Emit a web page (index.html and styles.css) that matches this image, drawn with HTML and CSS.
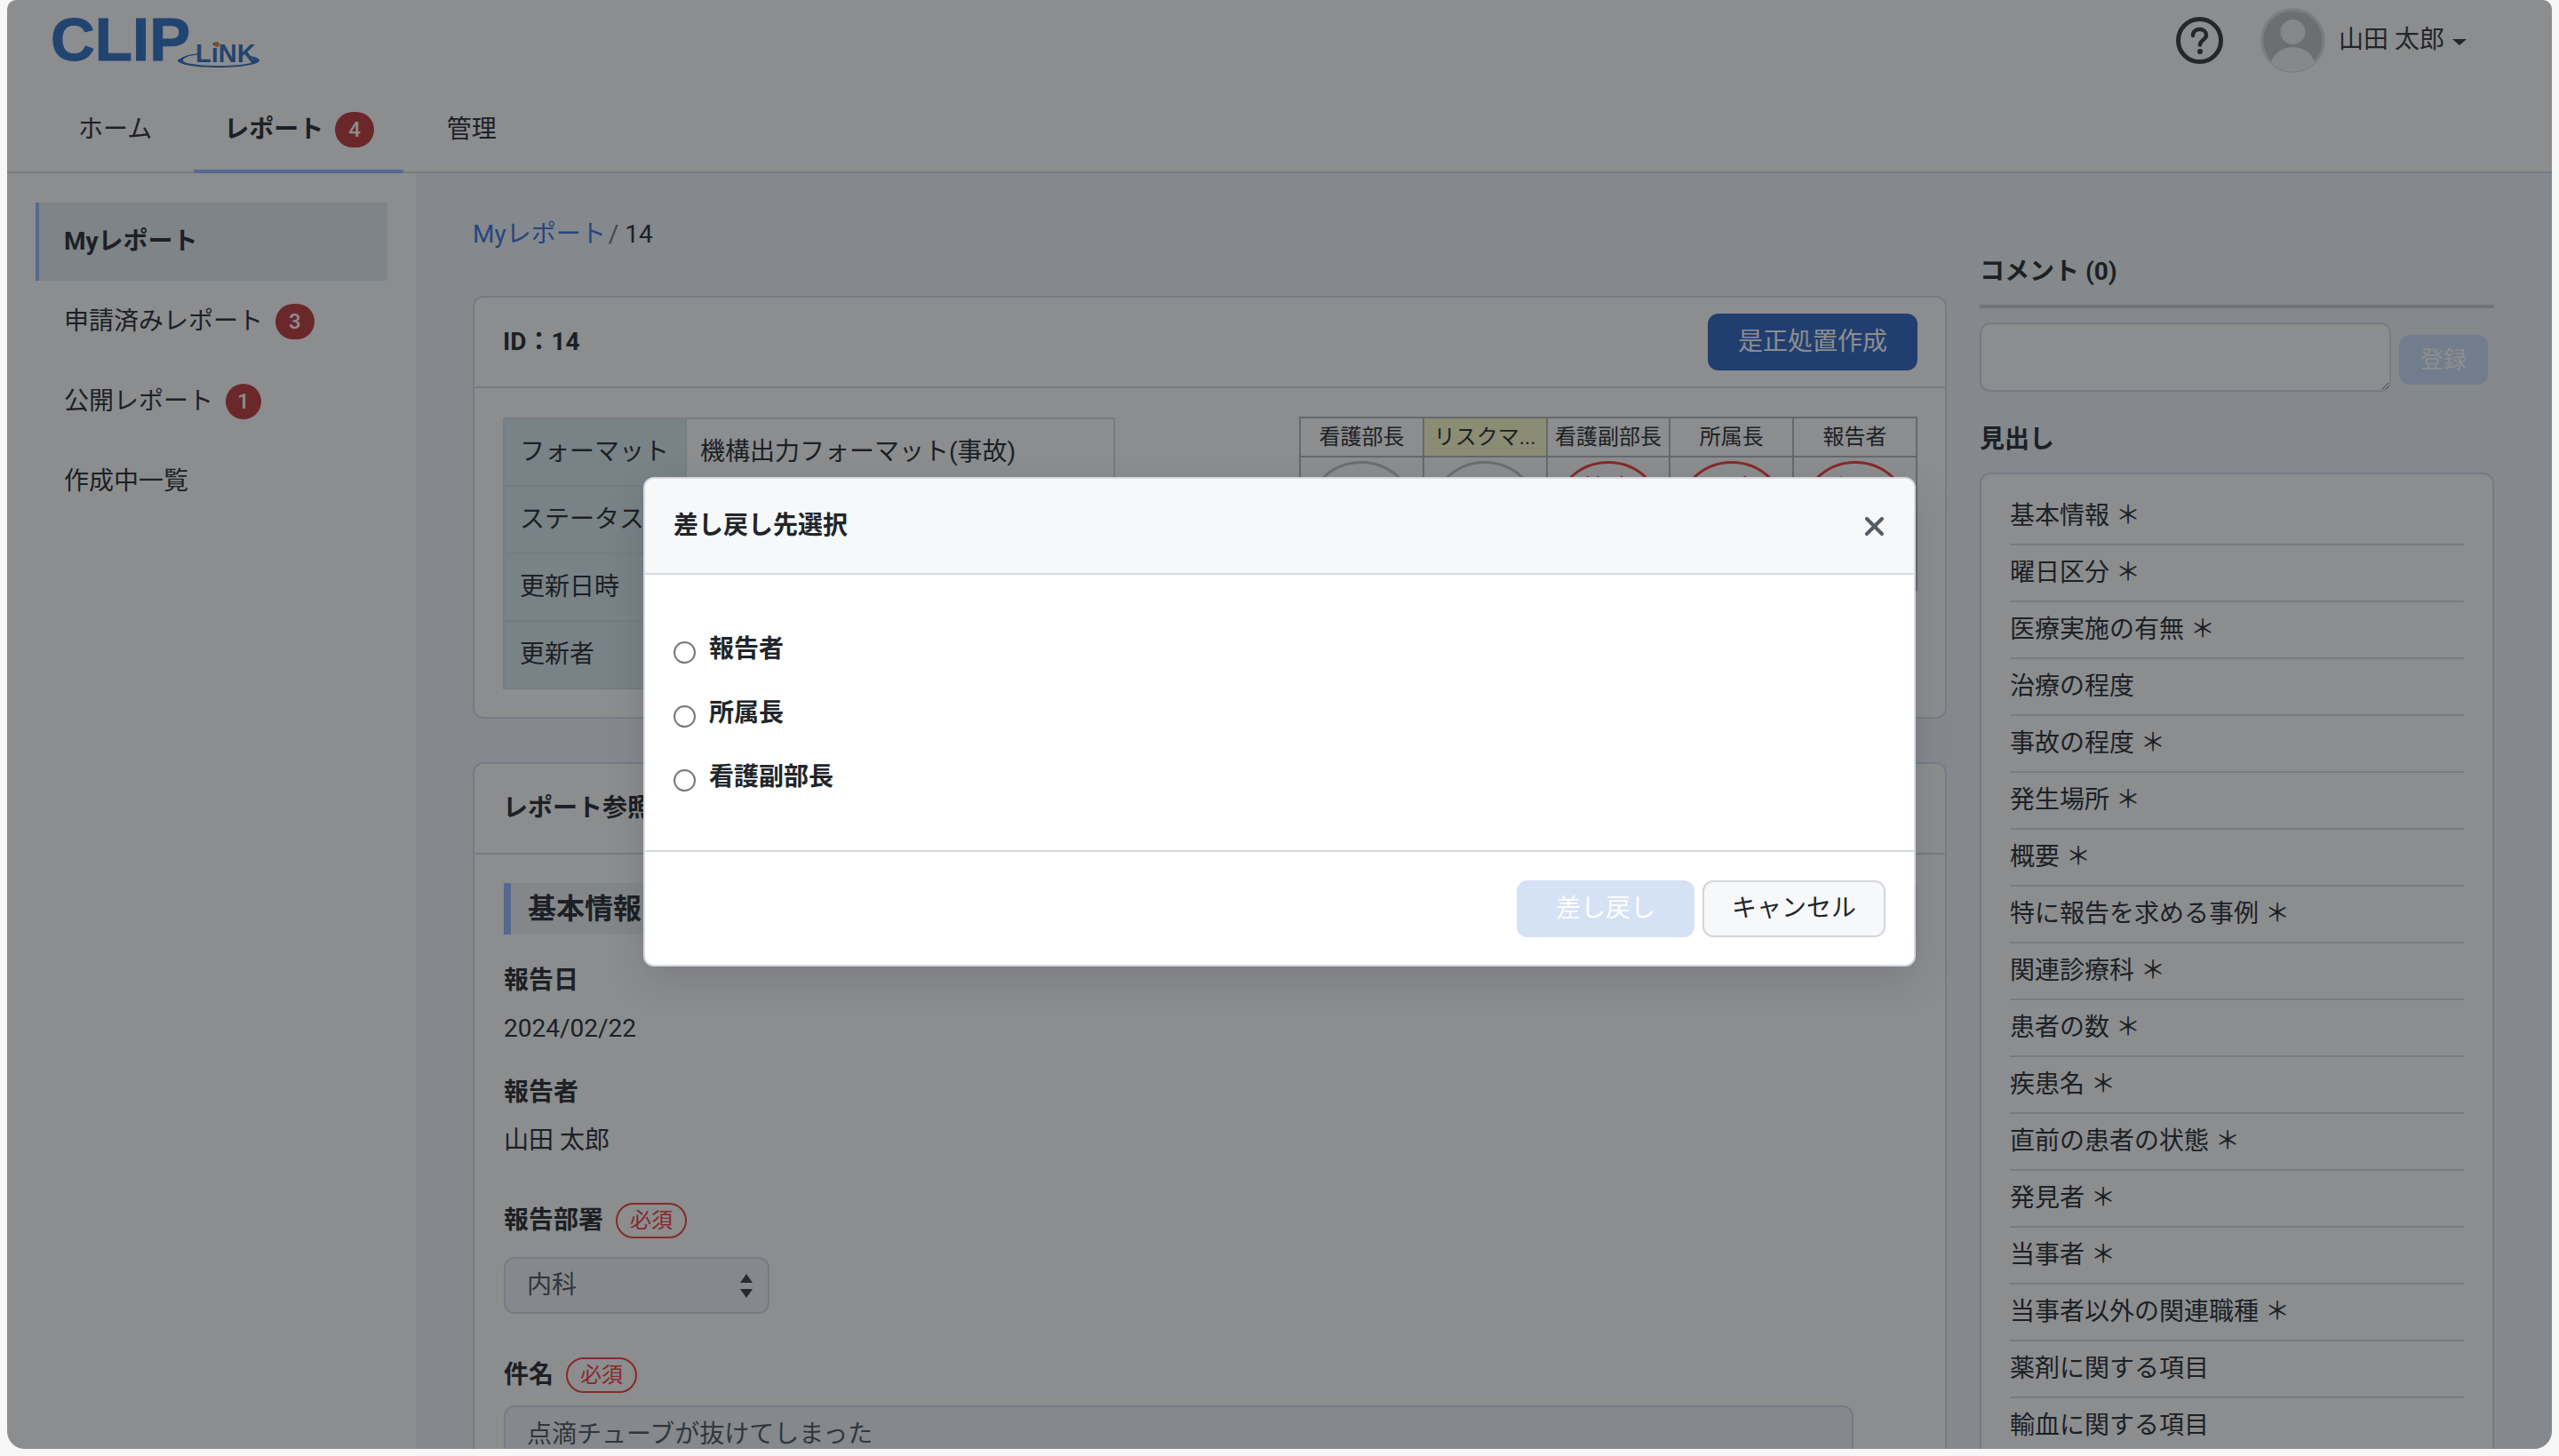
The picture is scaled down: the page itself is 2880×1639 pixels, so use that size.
FILE: index.html
```html
<!DOCTYPE html>
<html lang="ja">
<head>
    <meta charset="UTF-8">
    <meta name="viewport" content="width=device-width, initial-scale=1.0">
    <title>差し戻し先選択</title>
    <link rel="stylesheet" href="styles.css">
</head>
<body>
    <div class="app">
        <header class="header">
            <div class="header-top">
                <div class="logo">
                    <span class="logo-clip">CLIP</span>
                    <span class="logo-link">LiNK</span>
                    <span class="logo-dot"></span>
                    <svg class="logo-swoosh" viewBox="0 0 96 18" width="96" height="18">
                        <path d="M2 9C8 3 22 1 30 1L22 3C12 4 8 7 8 9C8 13 30 15 48 15C68 15 88 13 88 9C88 6 82 4 76 3C86 4 94 6 94 9C94 14 70 17 48 17C24 17 2 14 2 9Z" fill="#2a6cc0"/>
                    </svg>
                </div>
                <div class="header-user">
                    <svg class="help-icon" viewBox="0 0 53 53" width="53" height="53">
                        <circle cx="26.5" cy="26.5" r="24" fill="none" stroke="#2d343a" stroke-width="5"/>
                        <path d="M19 21C19 16.500 22.500 14 26.500 14C31 14 34 16.800 34 20.500C34 26 27 26 27 31.500" fill="none" stroke="#2d343a" stroke-width="4.500" stroke-linecap="round"/>
                        <circle cx="27" cy="39" r="3" fill="#2d343a"/>
                    </svg>
                    <svg class="avatar" viewBox="0 0 73 73" width="73" height="73">
                        <defs><clipPath id="av"><ellipse cx="36.500" cy="36.500" rx="35" ry="35"/></clipPath></defs>
                        <circle cx="36.500" cy="36.500" r="35.500" fill="#dcdcdc" stroke="#e2e2e2" stroke-width="2"/>
                        <circle cx="36.500" cy="36.500" r="33" fill="#c0c0c0"/>
                        <g clip-path="url(#av)">
                            <ellipse cx="36.500" cy="27" rx="14" ry="14" fill="#fff" opacity="0.8"/>
                            <ellipse cx="36.500" cy="66" rx="25" ry="22" fill="#fff" opacity="0.8"/>
                        </g>
                    </svg>
                    <span class="user-name">山田 太郎</span>
                    <span class="caret"></span>
                </div>
            </div>
            <nav class="tabs">
                <a class="tab">ホーム</a>
                <a class="tab tab-active">レポート<span class="badge">4</span></a>
                <a class="tab">管理</a>
            </nav>
        </header>

        <div class="layout">
            <aside class="sidebar">
                <a class="side-item side-active">Myレポート</a>
                <a class="side-item">申請済みレポート<span class="badge badge-side">3</span></a>
                <a class="side-item">公開レポート<span class="badge badge-side badge-narrow">1</span></a>
                <a class="side-item">作成中一覧</a>
            </aside>

            <main class="content">
                <div class="breadcrumb"><a class="crumb-link">Myレポート</a><span class="crumb-sep">/</span>14</div>

                <section class="card card-info">
                    <div class="card-head">
                        <span class="card-title">ID：14</span>
                        <button class="btn-primary">是正処置作成</button>
                    </div>
                    <div class="card-body info-body">
                        <table class="info-table">
                            <tr><th>フォーマット</th><td>機構出力フォーマット(事故)</td></tr>
                            <tr><th>ステータス</th><td></td></tr>
                            <tr><th>更新日時</th><td></td></tr>
                            <tr><th>更新者</th><td></td></tr>
                        </table>
                        <table class="stamp-table">
                            <tr>
                                <th>看護部長</th>
                                <th class="stamp-current"><span class="stamp-name">リスクマ...</span></th>
                                <th>看護副部長</th>
                                <th>所属長</th>
                                <th>報告者</th>
                            </tr>
                            <tr>
                                <td><div class="stamp"></div></td>
                                <td><div class="stamp"></div></td>
                                <td><div class="stamp stamp-done">笹本</div></td>
                                <td><div class="stamp stamp-done">五十</div></td>
                                <td><div class="stamp stamp-done">山田</div></td>
                            </tr>
                        </table>
                    </div>
                </section>

                <section class="card card-report">
                    <div class="card-head report-head"><span class="card-title">レポート参照</span></div>
                    <div class="card-body report-body">
                        <h2 class="section-title">基本情報</h2>
                        <div class="field-label first-label">報告日</div>
                        <div class="field-value value-first">2024/02/22</div>
                        <div class="field-label">報告者</div>
                        <div class="field-value">山田 太郎</div>
                        <div class="field-label label-req">報告部署<span class="required">必須</span></div>
                        <div class="select-wrap">
                            <select class="select-box"><option>内科</option></select>
                            <svg class="select-arrows" viewBox="0 0 16 27" width="16" height="27">
                                <path d="M8 0L15 10H1Z M1 17H15L8 27Z" fill="#343a40"/>
                            </svg>
                        </div>
                        <div class="field-label label-req label-title">件名<span class="required">必須</span></div>
                        <input class="text-box" type="text" value="点滴チューブが抜けてしまった">
                    </div>
                </section>
            </main>

            <aside class="right-col">
                <h3 class="comment-title">コメント (0)</h3>
                <div class="comment-row">
                    <textarea class="comment-input"></textarea>
                    <button class="btn-register">登録</button>
                </div>
                <h3 class="toc-title">見出し</h3>
                <ul class="toc">
                    <li>基本情報 ＊</li>
                    <li>曜日区分 ＊</li>
                    <li>医療実施の有無 ＊</li>
                    <li>治療の程度</li>
                    <li>事故の程度 ＊</li>
                    <li>発生場所 ＊</li>
                    <li>概要 ＊</li>
                    <li>特に報告を求める事例 ＊</li>
                    <li>関連診療科 ＊</li>
                    <li>患者の数 ＊</li>
                    <li>疾患名 ＊</li>
                    <li>直前の患者の状態 ＊</li>
                    <li>発見者 ＊</li>
                    <li>当事者 ＊</li>
                    <li>当事者以外の関連職種 ＊</li>
                    <li>薬剤に関する項目</li>
                    <li>輸血に関する項目</li>
                </ul>
            </aside>
        </div>

        <div class="backdrop">
            <div class="modal">
                <div class="modal-head">
                    <span class="modal-title">差し戻し先選択</span>
                    <svg class="modal-close" viewBox="0 0 21 21" width="21" height="21">
                        <path d="M2 2L19 19M19 2L2 19" stroke="#555c64" stroke-width="4" stroke-linecap="round"/>
                    </svg>
                </div>
                <div class="modal-body">
                    <label class="radio-row"><input type="radio" name="target"><span>報告者</span></label>
                    <label class="radio-row"><input type="radio" name="target"><span>所属長</span></label>
                    <label class="radio-row"><input type="radio" name="target"><span>看護副部長</span></label>
                </div>
                <div class="modal-foot">
                    <button class="btn-return">差し戻し</button>
                    <button class="btn-cancel">キャンセル</button>
                </div>
            </div>
        </div>
    </div>
</body>
</html>
```

FILE: styles.css
```css
* {
    box-sizing: border-box;
}
html, body {
    height: 100%;
}
body {
    margin: 0;
    background-color: #f7f7f7;
    color: #212529;
    font-family: Roboto, "Noto Sans CJK JP", sans-serif;
    font-size: 28px;
    line-height: 42px;
}
.app {
    position: relative;
    width: 2864px;
    height: 1631px;
    margin-left: 8px;
    overflow: hidden;
    border-radius: 10px 10px 20px 20px;
    background-color: #f0f5f8;
}

/* header */
.header {
    height: 195px;
    background-color: #fff;
    border-bottom: 2px solid #d3dce2;
}
.header-top {
    display: flex;
    justify-content: space-between;
    height: 100px;
}
.logo {
    position: relative;
    width: 240px;
    margin-left: 49px;
}
.logo-clip {
    position: absolute;
    left: 0;
    top: 7px;
    font-family: "Liberation Sans", sans-serif;
    font-weight: 700;
    font-size: 69px;
    line-height: 76px;
    -webkit-text-stroke: 1px #2a6cc0;
    color: #2a6cc0;
}
.logo-link {
    position: absolute;
    left: 163px;
    top: 46px;
    font-family: "Liberation Sans", sans-serif;
    font-weight: 700;
    font-size: 29px;
    line-height: 28px;
    color: #2a6cc0;
}
.logo-dot {
    position: absolute;
    left: 184px;
    top: 47px;
    width: 6px;
    height: 6px;
    border-radius: 50%;
    background-color: #d8803a;
}
.logo-swoosh {
    position: absolute;
    left: 141px;
    top: 59px;
}
.header-user {
    display: flex;
    align-items: center;
    height: 90px;
    padding-right: 96px;
}
.help-icon {
    margin-right: 42px;
}
.avatar {
    margin-right: 15px;
}
.user-name {
    color: #2b3036;
}
.caret {
    width: 0;
    height: 0;
    margin: 4px 0 0 9px;
    border-left: 8px solid transparent;
    border-right: 8px solid transparent;
    border-top: 7px solid #2b3036;
}
.tabs {
    display: flex;
    margin-left: 51px;
    height: 95px;
}
.tab {
    display: flex;
    align-items: center;
    height: 95px;
    padding: 0 33px 4px 29px;
}
.tab-active {
    margin-left: 14px;
    font-weight: 700;
    padding: 0 33px 0 34px;
    border-bottom: 4px solid #91b6ff;
    border-radius: 0 0 2px 2px;
}
.tab-active + .tab {
    padding-left: 49px;
}
.badge {
    display: inline-block;
    min-width: 39px;
    height: 40px;
    margin-left: 13px;
    padding: 0 15px;
    border-radius: 20px;
    background-color: #bc3434;
    color: #fff;
    font-weight: 500;
    font-size: 24px;
    line-height: 40px;
    text-align: center;
}
.badge-side {
    margin-left: 14px;
}
.badge-narrow {
    padding: 0 13px;
}

/* page columns */
.layout {
    display: flex;
    height: 1436px;
}
.sidebar {
    flex: none;
    width: 460px;
    padding: 33px 32px 0;
    background-color: #fff;
}
.side-item {
    display: flex;
    align-items: center;
    height: 88px;
    margin-bottom: 2px;
    padding-left: 32px;
}
.side-active {
    padding-left: 28px;
    border-left: 4px solid #91b6ff;
    background-color: #e4ecf0;
    font-weight: 700;
}
.content {
    flex: none;
    width: 1723px;
    padding: 48px 0 0 64px;
}
.breadcrumb {
    margin-bottom: 48px;
}
.crumb-link {
    color: #3070e0;
}
.crumb-sep {
    margin: 0 7px 0 3px;
    color: #6c757d;
}
.card {
    background-color: #fff;
    border: 2px solid #d3dce2;
    border-radius: 12px;
}
.card-info {
    height: 476px;
    margin-bottom: 49px;
}
.card-head {
    display: flex;
    align-items: center;
    justify-content: space-between;
    height: 102px;
    padding: 0 31px 0 32px;
    border-bottom: 2px solid #d3dce2;
}
.card-title {
    font-weight: 700;
}
.btn-primary {
    width: 236px;
    height: 64px;
    border: none;
    border-radius: 12px;
    background-color: #2860c0;
    color: #fff;
    font: inherit;
}
.info-body {
    display: flex;
    justify-content: space-between;
    align-items: flex-start;
    padding: 33px 31px 0 32px;
}
.info-table {
    width: 689px;
    border-collapse: collapse;
}
.info-table th, .info-table td {
    height: 76px;
    border: 2px solid #d3dce2;
    font-weight: 400;
    text-align: left;
}
.info-table th {
    width: 205px;
    padding: 0 0 0 17px;
    white-space: nowrap;
    background-color: #d8e8ef;
}
.info-table td {
    padding: 0 15px;
}
.stamp-table {
    width: 696px;
    margin-top: -1px;
    table-layout: fixed;
    border-collapse: collapse;
}
.stamp-table th, .stamp-table td {
    border: 2px solid #b3b6b8;
    padding: 0;
    text-align: center;
    font-size: 24px;
    font-weight: 400;
}
.stamp-table th {
    height: 43px;
    line-height: 42px;
}
.stamp-current {
    background-color: #fdfcc8;
}
.stamp-table td {
    height: 150px;
    vertical-align: top;
    padding-top: 4px;
}
.stamp {
    width: 126px;
    height: 126px;
    margin: 0 auto;
    padding-top: 12px;
    border: 3px solid #bfc0c0;
    border-radius: 50%;
    font-size: 30px;
    line-height: 34px;
}
.stamp-done {
    border-color: #f03834;
    color: #f03834;
}
.report-body {
    padding: 32px 33px 0;
}
.section-title {
    height: 58px;
    margin: 0 -2px 31px 0;
    padding-left: 19px;
    border-left: 8px solid #91b6ff;
    background-color: #eef2f5;
    font-size: 32px;
    line-height: 58px;
}
.field-label {
    font-weight: 700;
}
.field-value {
    margin: 12px 0 29px;
}
.value-first {
    margin-bottom: 30px;
}
.field-value + .label-req {
    margin-top: 48px;
}
.label-req {
    display: flex;
    align-items: center;
}
.label-title {
    margin-top: 48px;
}
.required {
    height: 40px;
    margin-left: 14px;
    padding: 0 14px;
    border: 2px solid #f03834;
    border-radius: 20px;
    color: #f03834;
    font-size: 24px;
    font-weight: 400;
    line-height: 36px;
}
.select-wrap {
    position: relative;
    width: 299px;
    height: 64px;
    margin-top: 20px;
}
.select-box {
    width: 100%;
    height: 100%;
    padding: 0 24px;
    border: 2px solid #d3dce2;
    border-radius: 12px;
    background-color: #f0f5f8;
    color: #495057;
    font: inherit;
    appearance: none;
}
.select-arrows {
    position: absolute;
    right: 18px;
    top: 19px;
}
.text-box {
    display: block;
    width: 1519px;
    height: 64px;
    margin-top: 13px;
    padding: 0 24px 5px;
    border: 2px solid #d3dce2;
    border-radius: 12px;
    background-color: #f0f5f8;
    color: #495057;
    font: inherit;
}

/* comment and headings */
.right-col {
    flex: none;
    width: 579px;
    margin-left: 37px;
    padding-top: 90px;
}
.comment-title, .toc-title {
    margin: 0;
    font-size: 28px;
    font-weight: 700;
}
.comment-title {
    padding-bottom: 16px;
    border-bottom: 4px solid #c4ced4;
}
.comment-row {
    display: flex;
    gap: 9px;
    margin-top: 16px;
}
.comment-input {
    width: 463px;
    height: 78px;
    border: 2px solid #d3dce2;
    border-radius: 12px;
    background-color: #fff;
}
.btn-register {
    width: 100px;
    height: 56px;
    margin-top: 14px;
    border: none;
    border-radius: 12px;
    background-color: #c9def8;
    color: #fff;
    font: inherit;
    font-size: 26px;
}
.toc-title {
    margin-top: 33px;
    margin-bottom: 16px;
}
.toc {
    margin: 0;
    padding: 16px 32px 0;
    list-style: none;
    background-color: #fff;
    border: 2px solid #d3dce2;
    border-radius: 12px;
    height: 1200px;
}
.toc li {
    height: 64px;
    padding-top: 10px;
    border-bottom: 2px solid #d3dce2;
}

/* modal over the page */
.backdrop {
    position: absolute;
    inset: 0;
    display: flex;
    justify-content: center;
    align-items: flex-start;
    padding-top: 537px;
    background-color: rgba(25, 28, 32, 0.5);
}
.modal {
    width: 1432px;
    height: 551px;
    border: 2px solid #d5dae2;
    border-radius: 12px;
    background-color: #fff;
    box-shadow: 0 16px 48px rgba(0, 0, 0, 0.12);
}
.modal-head {
    display: flex;
    align-items: center;
    justify-content: space-between;
    height: 108px;
    padding: 0 34px 0 32px;
    border-bottom: 2px solid #d5dae2;
    border-radius: 10px 10px 0 0;
    background-color: #f7f8fa;
}
.modal-title {
    font-weight: 700;
}
.modal-body {
    height: 312px;
    padding-top: 51px;
    border-bottom: 2px solid #d5dae2;
}
.radio-row {
    display: flex;
    align-items: center;
    height: 72px;
    padding-left: 32px;
    font-weight: 700;
}
.radio-row input {
    width: 25px;
    height: 25px;
    margin: 0 15px 0 0;
    border: 2px solid #777;
    border-radius: 50%;
    appearance: none;
}
.radio-row span {
    margin-top: -6px;
}
.modal-foot {
    display: flex;
    justify-content: flex-end;
    gap: 9px;
    padding: 32px 32px 0 0;
}
.btn-return, .btn-cancel {
    height: 64px;
    border-radius: 12px;
    font: inherit;
}
.btn-return {
    width: 200px;
    border: none;
    background-color: #d5e1f5;
    color: #fff;
}
.btn-cancel {
    width: 206px;
    border: 2px solid #d5d6d9;
    background-color: #f7f8fa;
    color: #212529;
}
```
